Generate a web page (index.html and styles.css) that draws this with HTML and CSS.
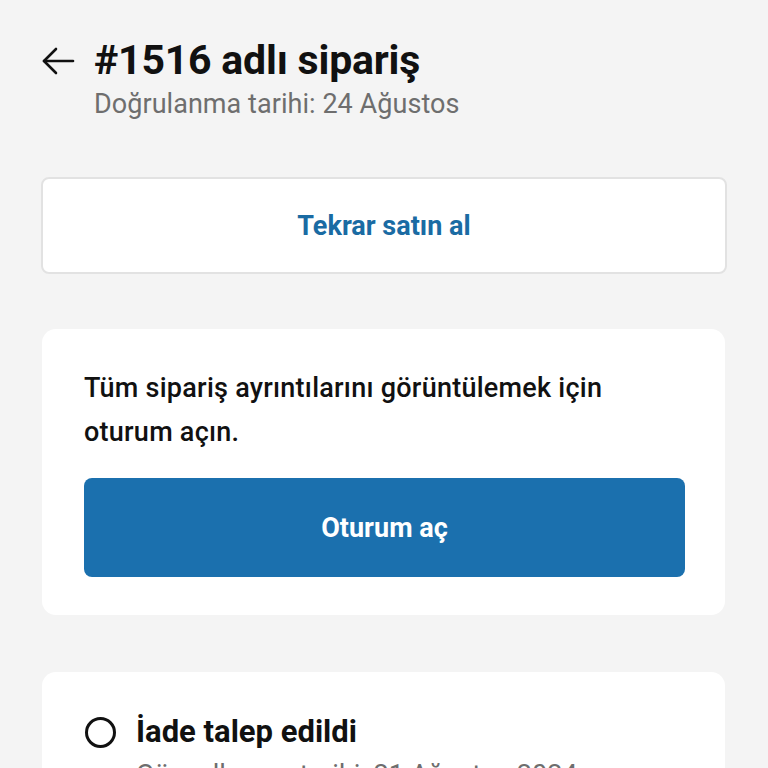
FILE: index.html
```html
<!DOCTYPE html>
<html lang="tr">
<head>
<meta charset="utf-8">
<title>#1516 adlı sipariş</title>
<link rel="stylesheet" href="styles.css">
</head>
<body>
<div class="page">
  <header class="header">
    <button class="back" aria-label="Geri">
      <svg width="34" height="34" viewBox="0 0 34 34" fill="none" stroke="#111" stroke-width="2.6" stroke-linecap="round" stroke-linejoin="round">
        <path d="M32 17H3"/>
        <path d="M15 5L3 17l12 12"/>
      </svg>
    </button>
    <div class="titles">
      <h1 class="title">#1516 adlı sipariş</h1>
      <div class="subtitle">Doğrulanma tarihi: 24 Ağustos</div>
    </div>
  </header>

  <button class="card rebuy">Tekrar satın al</button>

  <section class="card login">
    <p class="login-text">Tüm sipariş ayrıntılarını görüntülemek için oturum açın.</p>
    <button class="primary">Oturum aç</button>
  </section>

  <section class="card status">
    <div class="status-row">
      <span class="ring"></span>
      <span class="status-title">İade talep edildi</span>
    </div>
    <div class="status-sub">Güncellenme tarihi: 21 Ağustos 2024</div>
  </section>
</div>
</body>
</html>
```

FILE: styles.css
```css
* { box-sizing: border-box; }
html, body { margin: 0; padding: 0; }
body {
  background: #f4f4f4;
  font-family: Roboto, "Noto Sans", sans-serif;
  color: #111;
  overflow: hidden;
  height: 768px;
}
.page {
  padding: 36px 41px 0 41px;
  display: flex;
  flex-direction: column;
}
.header {
  display: flex;
  align-items: flex-start;
  gap: 19px;
}
.back {
  background: none;
  border: 0;
  padding: 0;
  margin-top: 8px;
  width: 34px;
  height: 34px;
  display: flex;
}
.titles { display: flex; flex-direction: column; }
.title {
  margin: 0;
  font-size: 41px;
  font-weight: 700;
  line-height: 48px;
  letter-spacing: -0.2px;
}
.subtitle {
  font-size: 27px;
  color: #6e6e6e;
  line-height: 32px;
  margin-top: 4px;
  letter-spacing: 0.05px;
}
.card {
  background: #fff;
  border-radius: 14px;
}
.rebuy {
  margin-top: 57px;
  height: 97px;
  width: 686px;
  border: 2px solid #e2e2e2;
  border-radius: 8px;
  font-family: inherit;
  font-size: 27px;
  font-weight: 700;
  color: #1a6ba3;
  cursor: pointer;
}
.login {
  margin-top: 55px;
  margin-left: 1px;
  width: 683px;
  padding: 37px 40px 38px 42px;
}
.login-text {
  margin: 0;
  font-size: 27px;
  font-weight: 500;
  line-height: 44px;
  padding-right: 60px;
  letter-spacing: 0.25px;
}
.primary {
  margin-top: 24px;
  width: 100%;
  height: 99px;
  border: 0;
  border-radius: 8px;
  background: #1b70ae;
  color: #fff;
  font-family: inherit;
  font-size: 27px;
  font-weight: 700;
}
.status {
  margin-top: 57px;
  margin-left: 1px;
  width: 683px;
  padding: 42px 42px 40px 43px;
}
.status-row {
  display: flex;
  align-items: center;
  gap: 20px;
  height: 36px;
}
.ring {
  width: 31px;
  height: 31px;
  border: 3px solid #111;
  border-radius: 50%;
  flex: none;
}
.status-title {
  font-size: 31px;
  font-weight: 700;
  line-height: 36px;
}
.status-sub {
  margin-left: 51px;
  margin-top: 9px;
  font-size: 27px;
  line-height: 32px;
  color: #6e6e6e;
}
```
